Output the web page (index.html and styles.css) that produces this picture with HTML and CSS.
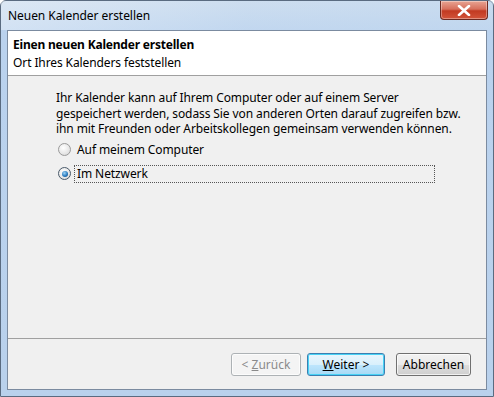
FILE: index.html
```html
<!DOCTYPE html>
<html>
<head>
<meta charset="utf-8">
<link rel="stylesheet" href="styles.css">
</head>
<body>
<div class="window">
  <div class="titlebar">
    <span class="title">Neuen Kalender erstellen</span>
    <div class="close"><svg width="14" height="11" viewBox="0 0 14 11"><path d="M2 1 L12 10 M12 1 L2 10" stroke="#fff" stroke-width="2.6" stroke-linecap="round"/></svg></div>
  </div>
  <div class="client">
    <div class="header">
      <div class="h-title">Einen neuen Kalender erstellen</div>
      <div class="h-sub">Ort Ihres Kalenders feststellen</div>
    </div>
    <div class="content">
      <p class="intro">Ihr Kalender kann auf Ihrem Computer oder auf einem Server<br>gespeichert werden, sodass Sie von anderen Orten darauf zugreifen bzw.<br>ihn mit Freunden oder Arbeitskollegen gemeinsam verwenden können.</p>
      <div class="option"><span class="radio"></span><span class="label">Auf meinem Computer</span></div>
      <div class="option checked"><span class="radio"><span class="dot"></span></span><span class="label focus">Im Netzwerk</span></div>
    </div>
    <div class="footer">
      <button class="btn disabled">&lt; <u>Z</u>urück</button>
      <button class="btn default"><u>W</u>eiter &gt;</button>
      <button class="btn cancel">Abbrechen</button>
    </div>
  </div>
</div>
</body>
</html>
```

FILE: styles.css
```css
html, body { margin: 0; padding: 0; }
body {
  width: 494px; height: 397px; overflow: hidden;
  font-family: "Noto Sans", "Open Sans", sans-serif;
  font-size: 12px; color: #000;
}
.window {
  box-sizing: border-box;
  width: 494px; height: 397px;
  background: linear-gradient(180deg, #c9dbee 0%, #bad2ee 8%, #b9d1ec 100%);
  border: 1px solid #5a6b80;
  border-radius: 6px 6px 0 0;
  display: flex; flex-direction: column;
}
.titlebar {
  height: 29px; display: flex; align-items: flex-start;
  padding-left: 7px;
  background: linear-gradient(90deg, rgba(255,255,255,0.35) 0%, rgba(220,232,245,0.2) 50%, rgba(200,220,240,0.4) 100%);
}
.title {
  line-height: 29px; font-size: 12px; color: #000;
  letter-spacing: -0.05px;
}
.close {
  margin-left: auto; margin-right: 5px;
  width: 46px; height: 18px;
  border: 1px solid #6b2a22; border-top: none;
  border-radius: 0 0 4px 4px;
  background: linear-gradient(180deg, #e8a493 0%, #d7705c 45%, #c23a22 55%, #d3543a 100%);
  display: flex; align-items: center; justify-content: center;
  box-shadow: inset 0 0 0 1px rgba(255,255,255,0.35);
}
.client {
  flex: 1; margin: 0 6px 6px 6px;
  border: 1px solid #7b8ba0;
  background: #f0f0f0;
  display: flex; flex-direction: column;
}
.header {
  background: #fff; height: 45px;
  border-bottom: 1px solid #a0a0a0;
  padding: 5px 0 0 5px; box-sizing: border-box;
}
.h-title { font-weight: bold; line-height: 18px; letter-spacing: -0.2px; }
.h-sub { line-height: 18px; letter-spacing: -0.1px; }
.content {
  flex: 1; padding: 14px 0 0 48px;
  border-bottom: 1px solid #a0a0a0;
}
.intro {
  margin: 0; white-space: nowrap; line-height: 15.5px; letter-spacing: -0.1px;
}
.option {
  display: flex; align-items: center; height: 20px; margin-top: 4px; padding-left: 2px;
}
.intro + .option { margin-top: 3px; }
.radio {
  width: 11px; height: 11px; border-radius: 50%;
  border: 1px solid #9a9a9a;
  background: radial-gradient(circle at 40% 35%, #fff 0%, #e6e6e6 60%, #cfcfcf 100%);
  display: flex; align-items: center; justify-content: center;
  margin-right: 6px; box-sizing: content-box;
}
.checked .radio { border-color: #4a5a6a; }
.dot {
  width: 6px; height: 6px; border-radius: 50%;
  background: radial-gradient(circle at 40% 35%, #9fd4f5 0%, #2a7cc0 55%, #0f3f70 100%);
}
.label { letter-spacing: -0.1px; }
.label.focus {
  border: 1px dotted #555; padding: 0 2px; margin-left: -3px;
  width: 355px; line-height: 16px;
}
.footer {
  height: 50px; display: flex; align-items: center; justify-content: flex-end;
  padding-right: 15px;
}
.btn {
  font-family: inherit; font-size: 12px;
  height: 23px; width: 75px; padding: 0;
  border: 1px solid #707070; border-radius: 3px;
  background: linear-gradient(180deg, #f2f2f2 0%, #ebebeb 50%, #dddddd 51%, #cfcfcf 100%);
  color: #000; margin-left: 6px;
  box-shadow: inset 0 0 0 1px rgba(255,255,255,0.7);
}
.btn.disabled {
  color: #8a8a8a; background: #f4f4f4; border-color: #adb2b5;
  width: 70px;
}
.btn.default {
  width: 78px; border-color: #3c7fb1;
  background: linear-gradient(180deg, #eaf6fd 0%, #d9f0fc 50%, #bee6fd 51%, #a7d9f5 100%);
  box-shadow: inset 0 0 0 1px #48d2f5;
}
.btn.cancel { margin-left: 11px; }
```
